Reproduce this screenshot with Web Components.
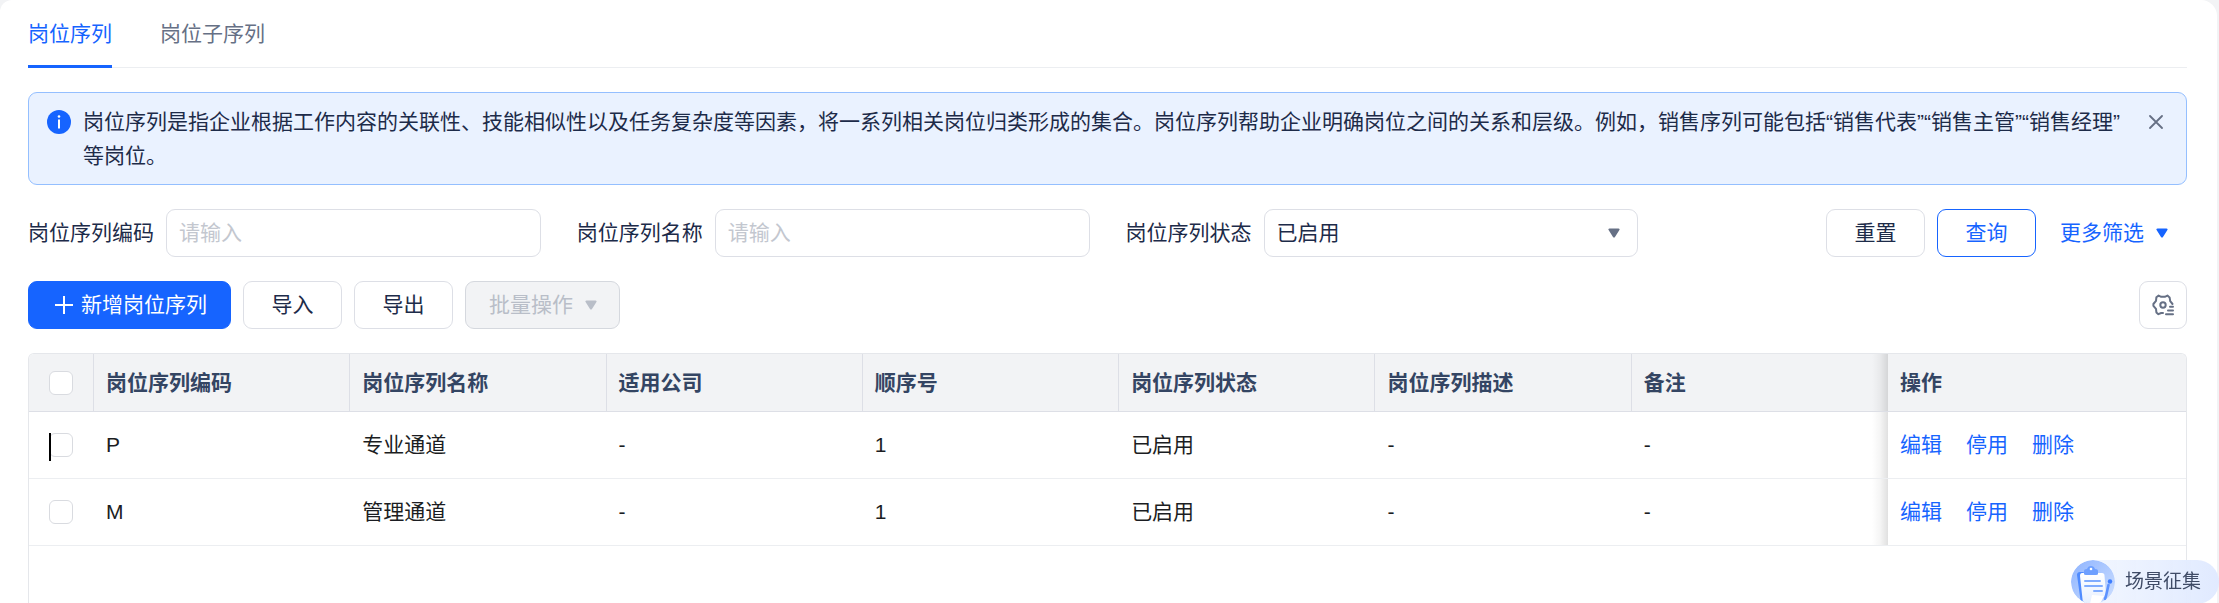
<!DOCTYPE html>
<html lang="zh-CN">
<head>
<meta charset="utf-8">
<title>岗位序列</title>
<style>
  html, body { margin: 0; }
  body {
    --blue: #1664ff;
    --ink: #1d2b49;
    --muted: #667085;
    --line: #dddfe6;
    background: #f2f3f5;
    color: var(--ink);
    font: 21px/32px "Liberation Sans", "Noto Sans CJK SC", sans-serif;
  }
</style>
</head>
<body>
<position-page></position-page>

<script>
const define = (name, html, setup) => {
  const template = document.createElement('template');
  template.innerHTML = html;
  customElements.define(name, class extends HTMLElement {
    constructor() {
      super();
      this.attachShadow({ mode: 'open' }).append(template.content.cloneNode(true));
    }
    connectedCallback() {
      if (setup && !this.ready) { this.ready = true; setup(this, this.shadowRoot); }
    }
  });
};

const ARROW = '<svg class="arrow" width="12" height="10" viewBox="0 0 12 10" aria-hidden="true"><path d="M1.5.5h9c1 0 1.4.8.9 1.6L7 8.9c-.5.8-1.5.8-2 0L.6 2.100C.1 1.300.5.5 1.500.5z" fill="currentColor"/></svg>';

define('ui-tabs', `
<style>
  :host { display: block; }
  nav { display: flex; gap: 48px; border-bottom: 1px solid #eceef1; }
  a { color: var(--muted); text-decoration: none; padding: 18px 0 15px; margin-bottom: -1px; border-bottom: 3px solid transparent; }
  a[aria-current] { color: var(--blue); border-color: var(--blue); }
</style>
<nav><a href="#sequence" aria-current="page">岗位序列</a><a href="#subsequence">岗位子序列</a></nav>`);

define('ui-alert', `
<style>
  :host { display: flex; align-items: flex-start; background: #eaf2ff; border: 1px solid #94bfff; border-radius: 9px; padding: 12px 18px 11px; line-height: 34px; }
  .info { flex: none; margin: 5px 12px 0 0; }
  p { flex: 1; margin: 0; }
  button { flex: none; display: grid; place-items: center; width: 24px; height: 34px; margin-left: 16px; padding: 0; border: 0; background: none; color: var(--muted); }
</style>
<svg class="info" width="24" height="24" viewBox="0 0 24 24" aria-hidden="true"><circle cx="12" cy="12" r="12" fill="#1664ff"/><circle cx="12" cy="6.500" r="1.300" fill="#fff"/><path d="M12 9.500v9" stroke="#fff" stroke-width="2"/></svg>
<p><slot></slot></p>
<button type="button" aria-label="关闭"><svg width="14" height="14" viewBox="0 0 14 14"><path d="M1 1l12 12M13 1L1 13" stroke="currentColor" stroke-width="1.800" stroke-linecap="round"/></svg></button>`);

define('ui-field', `
<style>
  :host { display: flex; align-items: center; gap: 12px; min-width: 0; }
  label { flex: none; }
  .box { flex: 1; min-width: 0; display: grid; align-items: center; }
  input, select { grid-area: 1 / 1; box-sizing: border-box; width: 100%; height: 48px; padding: 0 12px; border: 1px solid var(--line); border-radius: 9px; background: #fff; color: var(--ink); font: inherit; appearance: none; outline: 0; }
  input::placeholder { color: #c3c7cf; opacity: 1; }
  .arrow { grid-area: 1 / 1; justify-self: end; margin-right: 18px; color: var(--muted); pointer-events: none; }
</style>
<label for="control"></label><div class="box"></div>`, (host, root) => {
  root.querySelector('label').textContent = host.getAttribute('label');
  const value = host.getAttribute('value');
  root.querySelector('.box').innerHTML = value
    ? `<select id="control"><option>${value}</option></select>${ARROW}`
    : '<input id="control" type="text" placeholder="请输入">';
});

define('ui-button', `
<style>
  :host { display: block; flex: none; }
  button { box-sizing: border-box; display: flex; align-items: center; justify-content: center; min-width: 99px; height: 48px; padding: 0 27px; border: 1px solid var(--line); border-radius: 9px; background: #fff; color: var(--ink); font: inherit; white-space: nowrap; }
  .arrow { display: none; margin-left: 12px; }
  :host([menu]) .arrow { display: block; }
  :host([kind="primary"]) button { background: var(--blue); border-color: var(--blue); color: #fff; padding: 0 23px 0 26px; }
  :host([kind="outline"]) button { border-color: var(--blue); color: var(--blue); }
  :host([kind="text"]) button { border-color: transparent; color: var(--blue); padding: 0 18px 0 11px; }
  :host([kind="disabled"]) button { background: #f2f3f5; border-color: #d5d8de; color: #b9bec8; padding: 0 22px 0 23px; }
  :host([kind="icon"]) button { min-width: 0; width: 48px; padding: 0; color: var(--muted); }
</style>
<button type="button"><slot></slot>${ARROW}</button>`, (host, root) => {
  const button = root.querySelector('button');
  if (host.getAttribute('kind') === 'disabled') button.disabled = true;
  if (host.hasAttribute('label')) button.setAttribute('aria-label', host.getAttribute('label'));
});

define('ui-check', `
<style>
  :host { display: grid; justify-content: start; align-items: start; height: 24px; }
  input { grid-area: 1 / 1; box-sizing: border-box; appearance: none; width: 24px; height: 24px; margin: 0; border: 1px solid #d9dbe0; border-radius: 6px; background: #fff; }
  i { display: none; grid-area: 1 / 1; width: 2px; height: 28px; background: #000; z-index: 1; }
  :host([caret]) i { display: block; }
</style>
<input type="checkbox" aria-label="选择"><i></i>`);

define('data-table', `
<style>
  :host { display: block; border: 1px solid #e5e7eb; border-bottom: 0; border-radius: 6px 6px 0 0; overflow: hidden; color: #1b1d22; }
  table { width: 100%; table-layout: fixed; border-collapse: separate; border-spacing: 0; }
  .pick { width: 65px; }
  .ops { width: 298px; }
  th, td { box-sizing: border-box; padding: 0 12px; text-align: left; }
  th { height: 58px; background: #f2f3f5; color: #344563; font-weight: 700; border-right: 1px solid var(--line); border-bottom: 1px solid var(--line); }
  td { height: 67px; border-bottom: 1px solid #eceef1; }
  th:first-child, td:first-child { padding: 0 0 0 20px; }
  th:nth-last-child(-n+2) { border-right: 0; }
  th:nth-last-child(2), td:nth-last-child(2) { background-image: linear-gradient(to left, #0000001f, #0000000a 8px, #0000 16px); }
  .links { display: flex; gap: 24px; }
  a { color: var(--blue); text-decoration: none; }
</style>
<table>
  <colgroup><col class="pick"><col><col><col><col><col><col><col><col class="ops"></colgroup>
  <thead><tr><th scope="col"><ui-check></ui-check></th></tr></thead>
  <tbody></tbody>
</table>`, (host, root) => {
  const headings = ['岗位序列编码', '岗位序列名称', '适用公司', '顺序号', '岗位序列状态', '岗位序列描述', '备注', '操作'];
  const rows = [
    ['P', '专业通道', '-', '1', '已启用', '-', '-'],
    ['M', '管理通道', '-', '1', '已启用', '-', '-']
  ];
  root.querySelector('thead tr').insertAdjacentHTML('beforeend', headings.map(h => `<th scope="col">${h}</th>`).join(''));
  root.querySelector('tbody').innerHTML = rows.map((row, i) => `<tr><td><ui-check${i ? '' : ' caret'}></ui-check></td>${row.map(c => `<td>${c}</td>`).join('')}<td><div class="links"><a href="#edit">编辑</a><a href="#disable">停用</a><a href="#delete">删除</a></div></td></tr>`).join('');
});

define('scene-badge', `
<style>
  :host { display: block; position: fixed; right: 0; bottom: -1px; }
  a { display: flex; align-items: center; gap: 10px; padding-right: 18px; border-radius: 22px; background: linear-gradient(90deg, #f4f8fffa, #dfe9fff2); color: #3f4b66; font-size: 19px; line-height: 44px; text-decoration: none; }
  svg { display: block; }
</style>
<a href="#scene"><svg width="44" height="44" viewBox="0 0 44 44" aria-hidden="true">
  <defs>
    <linearGradient id="disc" x1="0" y1="0" x2="1" y2="1"><stop offset="0" stop-color="#8fb4ff"/><stop offset=".6" stop-color="#b4ceff"/><stop offset="1" stop-color="#cfe0ff"/></linearGradient>
    <linearGradient id="paper" x1="0" y1="0" x2="0" y2="1"><stop offset="0" stop-color="#fff"/><stop offset="1" stop-color="#e6efff"/></linearGradient>
    <clipPath id="round"><circle cx="22" cy="22" r="22"/></clipPath>
  </defs>
  <g clip-path="url(#round)">
    <circle cx="22" cy="22" r="22" fill="url(#disc)"/>
    <path d="M9 12h4l-2 3 3 29h-4L6 15q0-3 3-3z" fill="#4f8bff"/>
    <path d="M11 13h20q2.500 0 2.500 2.500L35 34q0 3-4 3l-2 7H15q-3 0-3.400-4L9 16q0-3 2-3z" fill="url(#paper)"/>
    <path d="M19 44l2-9 12 1-4 8z" fill="#fff"/>
    <path d="M13 11q0-2 3-2 1-3 4-3t4 3q3 0 3 2v3q0 1-2 1H15q-2 0-2-1z" fill="#6d9fff"/>
    <circle cx="20" cy="9" r="1.300" fill="#fff"/>
    <path d="M14 21h15M14 26h17M23 31h8" stroke="#80acff" stroke-width="2" stroke-linecap="round"/>
    <path d="M37.500 25l-2.500 11-1 3" stroke="#5c92ff" stroke-width="2.600" stroke-linecap="round" fill="none"/>
    <circle cx="39" cy="21.500" r="2.200" fill="#3c7cff"/>
  </g>
</svg><span>场景征集</span></a>`);

define('position-page', `
<style>
  :host { display: flex; min-height: 100vh; }
  main { flex: 1; min-width: 0; display: flex; flex-direction: column; gap: 24px; box-sizing: border-box; margin-right: 2px; padding: 0 30px 0 28px; background: #fff; border-radius: 12px 16px 0 0; }
  form { display: grid; grid-template-columns: repeat(4, minmax(0, 1fr)); gap: 36px; }
  .row { display: flex; gap: 12px; }
  .search { justify-content: flex-end; }
  .end { margin-left: auto; }
  .plus { margin-right: 8px; }
  data-table { flex: 1; }
</style>
<main>
  <ui-tabs></ui-tabs>
  <ui-alert>岗位序列是指企业根据工作内容的关联性、技能相似性以及任务复杂度等因素，将一系列相关岗位归类形成的集合。岗位序列帮助企业明确岗位之间的关系和层级。例如，销售序列可能包括“销售代表”“销售主管”“销售经理”等岗位。</ui-alert>
  <form>
    <ui-field label="岗位序列编码"></ui-field>
    <ui-field label="岗位序列名称"></ui-field>
    <ui-field label="岗位序列状态" value="已启用"></ui-field>
    <div class="row search">
      <ui-button>重置</ui-button>
      <ui-button kind="outline">查询</ui-button>
      <ui-button kind="text" menu>更多筛选</ui-button>
    </div>
  </form>
  <div class="row">
    <ui-button kind="primary"><svg class="plus" width="18" height="18" viewBox="0 0 18 18" aria-hidden="true"><path d="M9 0v18M0 9h18" stroke="currentColor" stroke-width="2"/></svg>新增岗位序列</ui-button>
    <ui-button>导入</ui-button>
    <ui-button>导出</ui-button>
    <ui-button kind="disabled" menu>批量操作</ui-button>
    <ui-button class="end" kind="icon" label="列设置"><svg width="22" height="22" viewBox="0 0 22 22" fill="none" stroke="currentColor" stroke-width="2" stroke-linecap="round" stroke-linejoin="round" aria-hidden="true">
      <path d="M20.500 10L18.200 7.200 17.600 3.400 15.400 1.600 12.800 2.800H9.200L6.600 1.600 4.400 3.200 4 6.900 1.400 10V11.800L4 14.800 4.400 18.400 6.400 20.200 9.200 19H11"/>
      <circle cx="11" cy="11" r="2.700"/>
      <path d="M18 12.800H21M16 16.500H21M14 20.200H21"/>
    </svg></ui-button>
  </div>
  <data-table></data-table>
</main>
<scene-badge></scene-badge>`);
</script>
</body>
</html>
